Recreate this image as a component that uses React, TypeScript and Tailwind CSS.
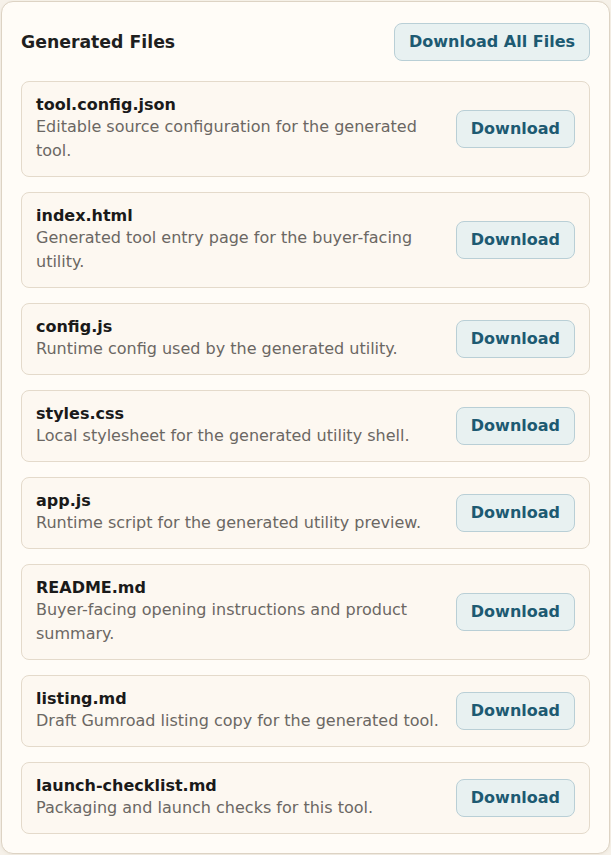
const files = [
  { name: "tool.config.json", desc: "Editable source configuration for the generated tool." },
  { name: "index.html", desc: "Generated tool entry page for the buyer-facing utility." },
  { name: "config.js", desc: "Runtime config used by the generated utility." },
  { name: "styles.css", desc: "Local stylesheet for the generated utility shell." },
  { name: "app.js", desc: "Runtime script for the generated utility preview." },
  { name: "README.md", desc: "Buyer-facing opening instructions and product summary." },
  { name: "listing.md", desc: "Draft Gumroad listing copy for the generated tool." },
  { name: "launch-checklist.md", desc: "Packaging and launch checks for this tool." },
];

function DownloadButton({ label }: { label: string }) {
  return (
    <button
      type="button"
      className="shrink-0 rounded-lg border border-[#b9cfd6] bg-[#e8f1f1] px-[14px] py-[8px] text-[16px] leading-[20px] font-bold text-[#1d5a72]"
    >
      {label}
    </button>
  );
}

export default function App() {
  return (
    <div
      className="min-h-screen bg-[#f6f1e9] p-px"
      style={{ fontFamily: '"DejaVu Sans", "Liberation Sans", sans-serif' }}
    >
      <div className="rounded-xl border border-[#ddd3c4] bg-[#fffcf7] px-[19px] pt-[21px] pb-[19px] shadow-[0_1px_3px_rgba(120,100,70,0.08)]">
        <div className="mb-[20px] flex items-center justify-between">
          <h2 className="mt-px text-[17.3px] font-bold text-[#1f1f1f]">Generated Files</h2>
          <DownloadButton label="Download All Files" />
        </div>

        <div className="flex flex-col gap-[15px]">
          {files.map((f) => (
            <div
              key={f.name}
              className="flex items-center justify-between gap-3 rounded-lg border border-[#e4dacb] bg-[#fdf8f1] px-[14px] py-[13px]"
            >
              <div className="min-w-0 flex-1">
                <div className="text-[16px] leading-[20px] font-bold text-[#1a1a1a]">{f.name}</div>
                <div className="text-[16px] leading-[24px] text-[#6b6763]">{f.desc}</div>
              </div>
              <DownloadButton label="Download" />
            </div>
          ))}
        </div>
      </div>
    </div>
  );
}
